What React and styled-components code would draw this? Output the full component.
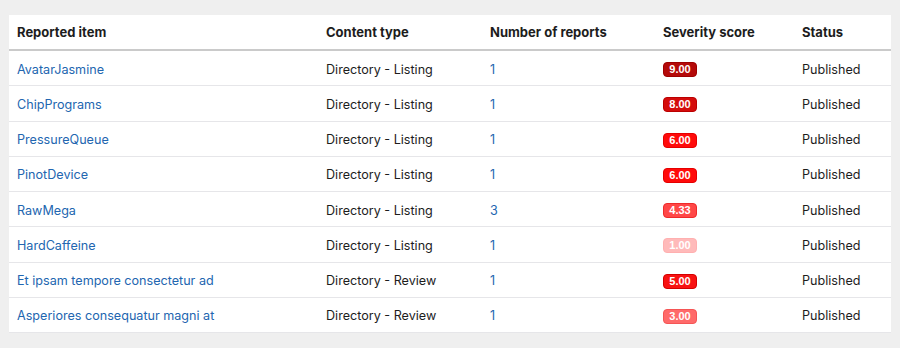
import React from "react";
import styled, { createGlobalStyle } from "styled-components";

const Global = createGlobalStyle`
  html, body { margin: 0; padding: 0; background: #efefef; }
  body { font-family: Inter, "Helvetica Neue", Arial, sans-serif; color: #1d1d1d; }
`;

const Page = styled.div`
  padding: 15px 9px;
`;

const Table = styled.table`
  width: 882px;
  border-collapse: collapse;
  background: #fff;
  font-size: 12.6px;
  table-layout: fixed;
`;

const Th = styled.th`
  box-sizing: border-box;
  text-align: left;
  font-weight: 650;
  font-size: 13px;
  height: 35px;
  padding: 0 8px;
  border-bottom: 2px solid #cacaca;
  width: ${(p) => p.$w}px;
`;

const Row = styled.tr`
  border-bottom: 1px solid #e6e6e9;
`;

const Td = styled.td`
  height: 32.25px;
  padding: 2px 8px 0;
  white-space: nowrap;
`;

const Link = styled.a`
  color: #2266b0;
  text-decoration: none;
`;

const Badge = styled.span`
  display: inline-block;
  min-width: 26px;
  padding: 0 3px;
  height: 13px;
  line-height: 13px;
  border-radius: 4px;
  font-family: "Liberation Sans", Arial, sans-serif;
  font-size: 11px;
  font-weight: 700;
  color: #fff;
  text-align: center;
  background: ${(p) => p.$bg};
  border: 1px solid ${(p) => p.$bd};
  vertical-align: middle;
`;

const colors = {
  "9.00": ["#b40a0a", "#9e0000"],
  "8.00": ["#d40c0c", "#bb0000"],
  "6.00": ["#ff0b0b", "#e50000"],
  "4.33": ["#ff4747", "#ee2a2a"],
  "1.00": ["#ffbaba", "#ffb0b0"],
  "5.00": ["#f81212", "#d40000"],
  "3.00": ["#ff6a6a", "#f55555"],
};

const rows = [
  ["AvatarJasmine", "Directory - Listing", "1", "9.00"],
  ["ChipPrograms", "Directory - Listing", "1", "8.00"],
  ["PressureQueue", "Directory - Listing", "1", "6.00"],
  ["PinotDevice", "Directory - Listing", "1", "6.00"],
  ["RawMega", "Directory - Listing", "3", "4.33"],
  ["HardCaffeine", "Directory - Listing", "1", "1.00"],
  ["Et ipsam tempore consectetur ad", "Directory - Review", "1", "5.00"],
  ["Asperiores consequatur magni at", "Directory - Review", "1", "3.00"],
];

export default function App() {
  return (
    <Page>
      <Global />
      <Table>
        <thead>
          <tr>
            <Th $w={309}>Reported item</Th>
            <Th $w={164}>Content type</Th>
            <Th $w={173}>Number of reports</Th>
            <Th $w={139}>Severity score</Th>
            <Th $w={97}>Status</Th>
          </tr>
        </thead>
        <tbody>
          {rows.map(([name, type, n, score], i) => (
            <Row key={i}>
              <Td><Link href="#">{name}</Link></Td>
              <Td>{type}</Td>
              <Td><Link href="#">{n}</Link></Td>
              <Td>
                <Badge $bg={colors[score][0]} $bd={colors[score][1]}>{score}</Badge>
              </Td>
              <Td>Published</Td>
            </Row>
          ))}
        </tbody>
      </Table>
    </Page>
  );
}
